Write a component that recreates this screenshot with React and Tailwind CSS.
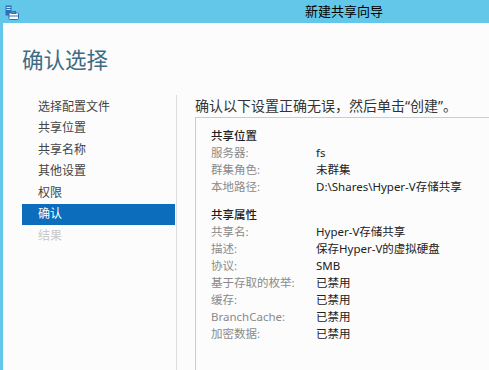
import React from 'react'

const font = { fontFamily: '"Noto Sans", "Noto Sans CJK SC", sans-serif' }

const steps = ['选择配置文件', '共享位置', '共享名称', '其他设置', '权限', '确认', '结果']

const location = [
  ['服务器:', 'fs'],
  ['群集角色:', '未群集'],
  ['本地路径:', 'D:\\Shares\\Hyper-V存储共享'],
]

const props = [
  ['共享名:', 'Hyper-V存储共享'],
  ['描述:', '保存Hyper-V的虚拟硬盘'],
  ['协议:', 'SMB'],
  ['基于存取的枚举:', '已禁用'],
  ['缓存:', '已禁用'],
  ['BranchCache:', '已禁用'],
  ['加密数据:', '已禁用'],
]

function WizardIcon() {
  return (
    <svg width="14" height="15" viewBox="0 0 14 15">
      <rect x="0.5" y="0.5" width="6" height="10" fill="#2f6fb5" />
      <rect x="1.5" y="2" width="4" height="1" fill="#cfe6f7" />
      <rect x="1.5" y="4" width="4" height="1" fill="#cfe6f7" />
      <rect x="4" y="8" width="9.5" height="6.5" rx="0.8" fill="#ffffff" stroke="#2f6fb5" strokeWidth="1" />
      <rect x="7" y="6.5" width="3.5" height="2" fill="none" stroke="#2f6fb5" strokeWidth="1" />
      <rect x="4" y="10.5" width="9.5" height="1" fill="#2f6fb5" />
    </svg>
  )
}

function Row({ label, value }) {
  return (
    <div className="flex leading-[17px] text-[11.5px]">
      <div className="w-[105px] shrink-0 text-[#8a8a8a]">{label}</div>
      <div className="text-[#222]">{value}</div>
    </div>
  )
}

export default function App() {
  return (
    <div className="w-[489px] h-[370px] overflow-hidden bg-[#62c7e8] flex flex-col" style={font}>
      <div className="h-[23px] shrink-0 flex items-center">
        <div className="ml-[5px] mt-[1px] flex"><WizardIcon /></div>
        <div className="ml-[286px] text-[13px] text-black leading-none">新建共享向导</div>
      </div>
      <div className="flex-1 ml-[3px] bg-[#fcfcfc] flex flex-col min-h-0">
        <div className="pt-[24px] pl-[19px] text-[21.5px] leading-[25px] text-[#3d6b84]">确认选择</div>
        <div className="flex flex-1 mt-[23px] min-h-0">
          <ul className="w-[174px] shrink-0 border-r border-[#dcdcdc] pt-[1px] text-[12px]">
            {steps.map((s, i) => (
              <li
                key={s}
                className={
                  i === 5
                    ? 'h-[21.5px] ml-[19px] mr-[1px] pl-[16px] flex items-center bg-[#0b6dbb] text-white'
                    : i === 6
                    ? 'h-[21.5px] ml-[19px] mr-[1px] pl-[16px] flex items-center text-[#c9c9c9]'
                    : 'h-[21.5px] ml-[19px] mr-[1px] pl-[16px] flex items-center text-[#444]'
                }
              >
                {s}
              </li>
            ))}
          </ul>
          <div className="flex-1 flex flex-col pl-[18px] min-w-0">
            <div className="mt-[2px] text-[14px] leading-[18px] text-[#333] whitespace-nowrap">
              确认以下设置正确无误，然后单击“创建”。
            </div>
            <div className="mt-[2px] flex-1 border-l border-t border-[#cccccc] -mr-[20px] pl-[15px] pt-[9px]">
              <div className="text-[11.5px] leading-[17px] font-medium text-[#1e1e1e]">共享位置</div>
              {location.map(([l, v]) => (
                <Row key={l} label={l} value={v} />
              ))}
              <div className="mt-[11px] text-[11.5px] leading-[17px] font-medium text-[#1e1e1e]">共享属性</div>
              {props.map(([l, v]) => (
                <Row key={l} label={l} value={v} />
              ))}
            </div>
          </div>
        </div>
      </div>
    </div>
  )
}
